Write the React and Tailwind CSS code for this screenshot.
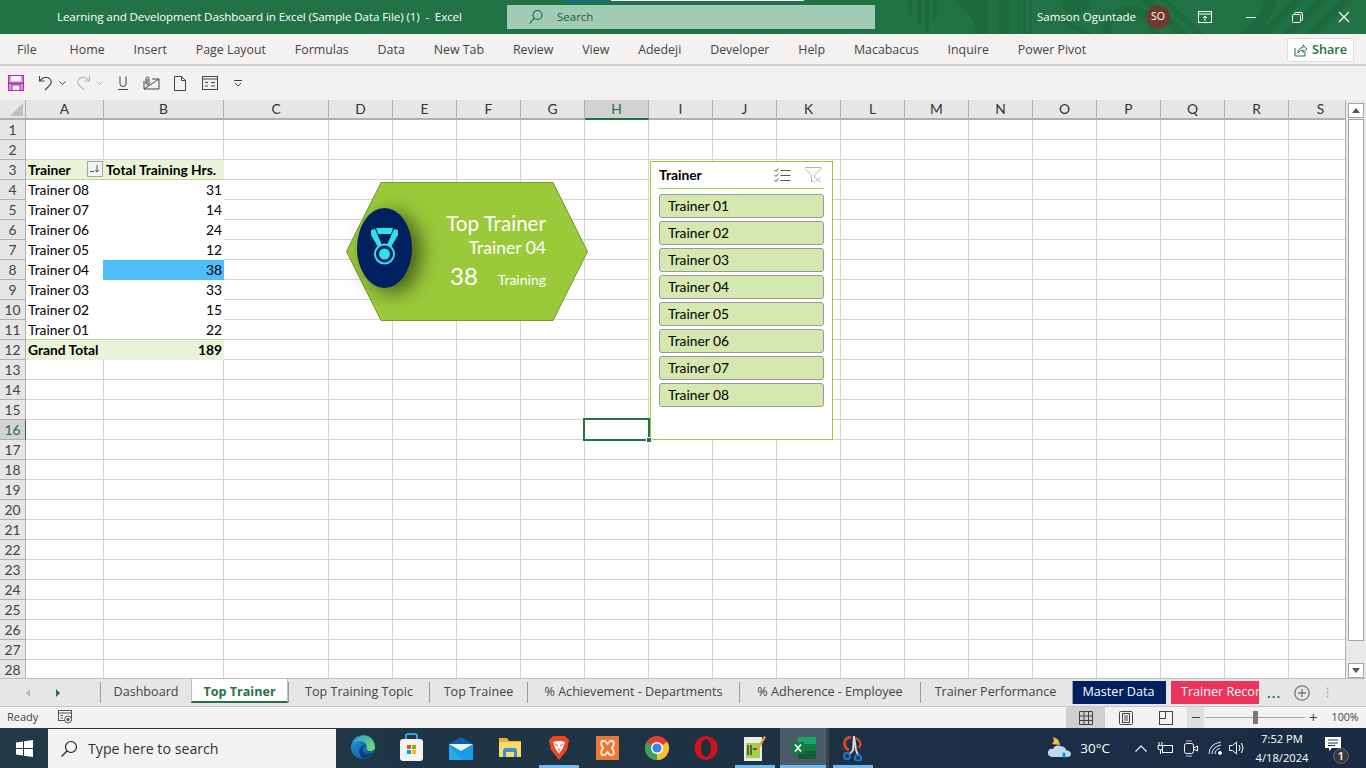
import React from "react";

const COLS = ["A","B","C","D","E","F","G","H","I","J","K","L","M","N","O","P","Q","R","S"];
const GRID = "grid grid-rows-[20px] grid-cols-[26px_78px_120px_105px_repeat(16,64px)]";
const RIBBON = ["Home","Insert","Page Layout","Formulas","Data","New Tab","Review","View","Adedeji","Developer","Help","Macabacus","Inquire","Power Pivot"];
const SHEETS = [
  { name: "Dashboard", w: "w-[91px]" },
  { name: "Top Trainer", w: "w-[97px]", active: true },
  { name: "Top Training Topic", w: "w-[141px]" },
  { name: "Top Trainee", w: "w-[98px]" },
  { name: "% Achievement - Departments", w: "w-[212px]" },
  { name: "% Adherence - Employee", w: "w-[181px]" },
  { name: "Trainer Performance", w: "w-[150px]" },
];
const PIVOT = {
  3: ["Trainer", "Total Training Hrs."],
  4: ["Trainer 08", 31], 5: ["Trainer 07", 14], 6: ["Trainer 06", 24], 7: ["Trainer 05", 12],
  8: ["Trainer 04", 38], 9: ["Trainer 03", 33], 10: ["Trainer 02", 15], 11: ["Trainer 01", 22],
  12: ["Grand Total", 189],
};
const SLICER = ["Trainer 01","Trainer 02","Trainer 03","Trainer 04","Trainer 05","Trainer 06","Trainer 07","Trainer 08"];
const cellFont = "font-['Lato','Liberation_Sans',sans-serif] text-[13.8px]";

function TitleArt() {
  return (
    <svg className="absolute left-[880px] top-0" width="486" height="34" viewBox="0 0 486 34" fill="#1e6a3f">
      <rect x="28" y="0" width="4" height="15" /><rect x="37" y="0" width="4" height="24" /><rect x="45" y="0" width="4" height="31" /><rect x="53" y="0" width="4" height="20" />
      <polygon points="75,0 95,0 95,22" />
      <rect x="94" y="0" width="14" height="34" /><rect x="118" y="0" width="12" height="34" />
      <rect x="137" y="0" width="3" height="34" /><rect x="143" y="0" width="3" height="34" /><rect x="149" y="0" width="3" height="34" />
      <circle cx="196" cy="0" r="14" />
      <circle cx="250" cy="34" r="24" fill="none" stroke="#1e6a3f" strokeWidth="8" />
      <polygon points="176,20 186,20 214,34 204,34" />
      <path d="M260 0 L296 34 L308 34 L272 0 Z" />
      <path d="M280 0 L316 34 L324 34 L288 0 Z" />
      <path d="M360 34 A62 62 0 0 0 384 0 L398 0 A76 76 0 0 1 376 34 Z" />
      <path d="M412 0 L378 34 L390 34 L424 0 Z" /><path d="M436 0 L402 34 L414 34 L448 0 Z" /><path d="M460 0 L426 34 L438 34 L472 0 Z" />
    </svg>
  );
}

function TitleBar() {
  return (
    <div className="relative flex h-[34px] items-center bg-[#217346] text-white font-['Open_Sans',sans-serif]">
      <TitleArt />
      <div className="absolute left-[564px] top-0 h-[1px] w-[47px] bg-[#0f6cbd]" />
      <div className="absolute left-[611px] top-0 h-[1px] w-[193px] bg-white" />
      <span className="relative ml-[57px] w-[450px] whitespace-pre pb-[1px] text-[11.6px] tracking-[-0.1px]">Learning and Development Dashboard in Excel (Sample Data File) (1)  -  Excel</span>
      <div className="relative flex h-[24px] w-[368px] items-center bg-[#a0ccb5] text-[#1e5c3a]">
        <svg className="ml-[21px]" width="16" height="16" viewBox="0 0 16 16" fill="none" stroke="#1e5c3a" strokeWidth="1.1"><circle cx="9.5" cy="6" r="4.5" /><path d="M6.2 9.3 L1.5 14.5" /></svg>
        <span className="ml-[13px] text-[11.5px]">Search</span>
      </div>
      <span className="relative ml-[162px] text-[11.5px]">Samson Oguntade</span>
      <div className="relative ml-[10px] flex h-[24px] w-[24px] items-center justify-center rounded-full bg-[#6b3a2e] text-[10.5px]">SO</div>
      <svg className="relative ml-[28px]" width="14" height="13" viewBox="0 0 14 13" fill="none" stroke="white"><rect x="0.5" y="0.5" width="13" height="11" /><path d="M0.5 3 H13.5 M7 10 V5 M5 7 L7 5 L9 7" /></svg>
      <div className="relative ml-[34px] h-[1px] w-[10px] bg-white" />
      <svg className="relative ml-[36px]" width="11" height="11" viewBox="0 0 11 11" fill="none" stroke="white"><rect x="0.5" y="2.5" width="8" height="8" rx="1" /><path d="M2.5 2.5 V1.5 Q2.5 0.5 3.5 0.5 H9 Q10.5 0.5 10.5 2 V7.5 Q10.5 8.5 9 8.5" /></svg>
      <svg className="relative ml-[35px]" width="12" height="12" viewBox="0 0 12 12" stroke="white" strokeWidth="1.1"><path d="M1 1 L11 11 M11 1 L1 11" /></svg>
    </div>
  );
}

function RibbonTabs() {
  return (
    <div className="flex h-[32px] items-center border-b-2 border-[#d2d0ce] bg-[#f3f2f1] pt-[2px] text-[12.4px] text-[#444] font-['Open_Sans',sans-serif]">
      <span className="ml-[17px] mr-[33px]">File</span>
      <div className="flex gap-[28.85px]">
        {RIBBON.map((t) => <span key={t}>{t}</span>)}
      </div>
      <div className="ml-auto mr-[12px] flex h-[24px] w-[67px] items-center justify-center gap-[4px] rounded-[2px] border border-[#e1dfdd] bg-white text-[12.6px] font-semibold text-[#217346]">
        <svg width="14" height="14" viewBox="0 0 14 14" fill="none" stroke="#217346"><path d="M1 5 V13 H11 V9" /><path d="M4 10 Q4 5 9 4.5 V2 L13 6 L9 9.5 V7 Q6 7 4 10 Z" /></svg>
        Share
      </div>
    </div>
  );
}

function QuickAccess() {
  return (
    <div className="relative flex h-[34px] items-center bg-[#f3f2f1] shadow-[0_1px_2px_rgba(0,0,0,0.12)]">
      <svg className="ml-[8px]" width="16" height="16" viewBox="0 0 16 16"><rect x="0.5" y="0.5" width="15" height="15" fill="#dd8fdd" stroke="#a835a8" /><rect x="3" y="1" width="10" height="5.5" fill="#f3f2f1" /><rect x="4" y="10" width="8" height="5.5" fill="#f3f2f1" stroke="#a835a8" /><rect x="1" y="7.5" width="14" height="1.6" fill="#a835a8" /></svg>
      <svg className="ml-[14px]" width="16" height="16" viewBox="0 0 16 16" fill="none" stroke="#444" strokeWidth="1.1"><path d="M1.5 1 V6 H6.5" /><path d="M1.5 6 L5 3 Q9 1 12 4 Q15 8 11 11 L7 15" /></svg>
      <svg className="ml-[5px]" width="7" height="5" viewBox="0 0 7 5" fill="none" stroke="#444"><path d="M0.5 0.5 L3.5 3.5 L6.5 0.5" /></svg>
      <svg className="ml-[9px]" width="16" height="16" viewBox="0 0 16 16" fill="none" stroke="#b5b5b5" strokeWidth="1.1"><path d="M14.5 1 V6 H9.5" /><path d="M14.5 6 L11 3 Q7 1 4 4 Q1 8 5 11 L9 15" /></svg>
      <svg className="ml-[5px]" width="7" height="5" viewBox="0 0 7 5" fill="none" stroke="#b5b5b5"><path d="M0.5 0.5 L3.5 3.5 L6.5 0.5" /></svg>
      <svg className="ml-[15px]" width="10" height="14" viewBox="0 0 10 14" fill="none" stroke="#444"><path d="M2 0.5 V8 Q2 10.5 5 10.5 Q8 10.5 8 8 V0.5" /><path d="M0 13.5 H10" /></svg>
      <svg className="ml-[15px]" width="17" height="14" viewBox="0 0 17 14" fill="none" stroke="#444"><path d="M1 5 V13 H16 V3 H9" /><path d="M1 13 L16 3" /><path d="M3 8 V2.5 Q3 1 4.5 1 Q6 1 6 2.5 V8 Q6 9 5 9 Q4 9 4 8 V3" /></svg>
      <svg className="ml-[14px]" width="12" height="15" viewBox="0 0 12 15" fill="none" stroke="#444"><path d="M0.5 0.5 H7.5 L11.5 4.5 V14.5 H0.5 Z M7.5 0.5 V4.5 H11.5" /></svg>
      <svg className="ml-[16px]" width="16" height="14" viewBox="0 0 16 14" fill="none" stroke="#444"><rect x="0.5" y="0.5" width="15" height="13" /><path d="M0.5 3 H15.5 M3 6.5 H6 M3 10 H6 M9 6.5 H13 M9 10 H13" /></svg>
      <svg className="ml-[16px]" width="8" height="7" viewBox="0 0 8 7" fill="none" stroke="#444"><path d="M0 0.5 H8 M1 3 L4 6 L7 3" /></svg>
    </div>
  );
}

function PivotCell({ row, col }) {
  const data = PIVOT[row];
  const bold = row === 3 || row === 12;
  const value = data[col];
  const tone = bold ? "bg-[#e9f3d9] font-bold" : "bg-white";
  const edge = row === 3 || row === 11 ? "border-b border-[#c2d99a]" : "border-b border-transparent";
  if (col === 0) {
    return (
      <div className={`relative flex items-center pl-[2px] pt-[1px] ${tone} ${edge} ${cellFont} text-black`}>
        <span className="whitespace-nowrap">{value}</span>
        {row === 3 && (
          <span className="absolute right-[1px] top-[1px] flex h-[16px] w-[16px] items-center justify-center border border-[#a6a6a6] bg-[#f4f4f4]">
            <svg width="12" height="10" viewBox="0 0 12 10" fill="none" stroke="#555"><path d="M1 7.5 H5 M8 1 V8 M6 6 L8 8 L10 6" /></svg>
          </span>
        )}
      </div>
    );
  }
  const highlight = row === 8 ? "bg-[#4fbdf8]" : tone;
  return (
    <div className={`relative -ml-[1px] flex items-center pr-[2px] pt-[1px] ${row === 3 ? "justify-start pl-[3px]" : "justify-end"} ${highlight} ${edge} ${cellFont} text-black whitespace-nowrap`}>
      {value}
    </div>
  );
}

function SheetRow({ row }) {
  const selected = row === 16;
  return (
    <div className={`${GRID} h-[20px]`}>
      <div className={`flex items-center justify-center border-b border-r pt-[1px] text-[#444] ${cellFont} ${selected ? "border-b-[#b0b0b0] border-r-[#217346] bg-[#d2d2d2] text-[#217346]" : "border-[#b0b0b0] bg-[#e6e6e6]"}`}>{row}</div>
      {COLS.map((c, i) =>
        PIVOT[row] && i < 2 ? (
          <PivotCell key={c} row={row} col={i} />
        ) : (
          <div key={c} className="border-b border-r border-[#d4d4d4] bg-white" />
        )
      )}
    </div>
  );
}

function TopTrainerCard() {
  return (
    <div className="absolute left-[346px] top-[82px] h-[139px] w-[242px] text-white font-['Lato',sans-serif]">
      <svg className="absolute inset-0" width="242" height="139" viewBox="0 0 242 139">
        <defs><filter id="blur" x="-60%" y="-60%" width="220%" height="220%"><feGaussianBlur stdDeviation="10" /></filter></defs>
        <polygon points="0.5,69.5 35,0.5 207,0.5 241.5,69.5 207,138.5 35,138.5" fill="#9aca3a" stroke="#71982a" />
        <ellipse cx="47" cy="71" rx="28" ry="40" fill="#000" opacity="0.55" filter="url(#blur)" />
        <ellipse cx="38.5" cy="66" rx="27.5" ry="40" fill="#002060" />
        <polygon points="30,46 47,46 45,52 32,52" fill="#2ee3e6" />
        <polygon points="25,48 29,47 36,63 32,65 25,53" fill="#2ee3e6" />
        <polygon points="52,48 48,47 41,63 45,65 52,53" fill="#2ee3e6" />
        <circle cx="38.5" cy="72" r="9.5" fill="none" stroke="#2ee3e6" strokeWidth="2" />
        <circle cx="38.5" cy="72" r="5.5" fill="#2ee3e6" />
      </svg>
      <div className="absolute right-[42px] top-[28px] flex flex-col items-end">
        <span className="text-[20.6px] leading-[26px]">Top Trainer</span>
        <span className="text-[17.5px] leading-[23px]">Trainer 04</span>
        <div className="mt-[1px] flex w-[96px] items-baseline justify-between">
          <span className="text-[24px] leading-[32px]">38</span>
          <span className="text-[14px]">Training</span>
        </div>
      </div>
    </div>
  );
}

function Slicer() {
  return (
    <div className="absolute left-[650px] top-[61px] flex h-[279px] w-[183px] flex-col border border-[#9aca3a] bg-white px-[8px] text-black font-['Lato',sans-serif]">
      <div className="flex h-[27px] items-center justify-between border-b border-[#9aca3a]">
        <span className="text-[13.8px] font-bold">Trainer</span>
        <div className="flex items-center gap-[13px] pr-[2px]">
          <svg width="18" height="16" viewBox="0 0 17 16" fill="none" stroke="#555"><path d="M1 3 L2.5 4.5 L5 1.5 M1 8 L2.5 9.5 L5 6.5 M1 13 L2.5 14.5 L5 11.5 M7 3.5 H17 M7 8.5 H17 M7 13.5 H17" /></svg>
          <svg width="18" height="16" viewBox="0 0 17 16" fill="none" stroke="#b5b5b5"><path d="M0.5 0.5 H16.5 V2 L10 8 V11 M0.5 2 L7 8 V15 L9 13.5" /><path d="M10 10 L16 15.5 M16 10 L10 15.5" /></svg>
        </div>
      </div>
      <div className="mt-[5px] flex flex-col gap-[3px]">
        {SLICER.map((t) => (
          <div key={t} className="flex h-[24px] items-center rounded-[3px] border border-[#9a9a9a] bg-[#d5e8af] pl-[8px] text-[13.8px]">{t}</div>
        ))}
      </div>
    </div>
  );
}

function Sheet() {
  const rows = Array.from({ length: 28 }, (_, i) => i + 1);
  return (
    <div className="relative flex h-[578px] overflow-hidden bg-[#e6e6e6]">
      <div className="w-[1346px] overflow-hidden border-r border-[#b0b0b0]">
        <div className={`${GRID} h-[20px] ${cellFont} text-[#333]`}>
          <div className="relative border-b-2 border-r border-[#b0b0b0] bg-[#e6e6e6]">
            <div className="absolute bottom-[2px] right-[2px] h-0 w-0 border-b-[13px] border-l-[13px] border-b-[#c0c0c0] border-l-transparent" />
          </div>
          {COLS.map((c) => (
            <div key={c} className={`flex items-center justify-center border-b-2 border-r ${c === "H" ? "border-b-[#217346] border-r-[#b0b0b0] bg-[#d2d2d2] text-[#217346]" : "border-[#b0b0b0] bg-[#e6e6e6]"}`}>{c}</div>
          ))}
        </div>
        {rows.map((r) => <SheetRow key={r} row={r} />)}
      </div>
      <div className="flex w-[20px] flex-col items-center bg-[#e9e9e9] pt-[3px]">
        <div className="flex h-[15px] w-[16px] items-center justify-center border border-[#a6a6a6] bg-white">
          <div className="h-0 w-0 border-x-[4px] border-b-[5px] border-x-transparent border-b-[#555]" />
        </div>
        <div className="mt-[1px] h-[522px] w-[16px] border border-[#a6a6a6] bg-white" />
        <div className="mt-[22px] flex h-[15px] w-[16px] items-center justify-center border border-[#a6a6a6] bg-white">
          <div className="h-0 w-0 border-x-[4px] border-t-[5px] border-x-transparent border-t-[#555]" />
        </div>
      </div>
      <TopTrainerCard />
      <Slicer />
      <div className="absolute left-[583px] top-[318px] h-[23px] w-[67px] border-2 border-[#217346]" />
      <div className="absolute left-[646px] top-[337px] h-[6px] w-[6px] border border-white bg-[#217346]" />
    </div>
  );
}

function SheetTabs() {
  return (
    <div className="flex h-[29px] items-stretch border-t border-[#bdbdbd] border-b border-b-[#c8c8c8] bg-[#e6e6e6] text-[12.6px] text-[#444] font-['Open_Sans',sans-serif]">
      <div className="flex w-[100px] items-center pl-[26px]">
        <div className="h-0 w-0 border-y-[4px] border-r-[4px] border-y-transparent border-r-[#b8b8b8]" />
        <div className="ml-[26px] h-0 w-0 border-y-[4px] border-l-[4px] border-y-transparent border-l-[#217346]" />
      </div>
      {SHEETS.map((s) => s.active ? (
        <div key={s.name} className={`${s.w} -mt-[1px] mb-[3px] flex items-center justify-center border-x border-t border-[#bdbdbd] border-b-2 border-b-[#217346] bg-white pt-[4px] font-bold text-[#217346]`}>{s.name}</div>
      ) : (
        <div key={s.name} className={`${s.w} my-[3px] flex items-center justify-center border-l border-[#9a9a9a] whitespace-nowrap`}>{s.name}</div>
      ))}
      <div className="my-[2px] ml-[2px] flex w-[94px] items-center justify-center border-l border-[#9a9a9a] bg-[#002060] pr-[2px] text-white">Master Data</div>
      <div className="my-[2px] ml-[5px] flex w-[88px] items-center whitespace-nowrap bg-[#eb345c] pl-[10px] text-white">Trainer Recor</div>
      <span className="ml-[8px] self-center pt-[2px] text-[13px] font-bold tracking-[1px] text-[#217346]">...</span>
      <svg className="ml-[13px] self-center" width="16" height="16" viewBox="0 0 16 16" fill="none" stroke="#777" strokeWidth="1.3"><circle cx="8" cy="8" r="7.2" /><path d="M8 4 V12 M4 8 H12" /></svg>
      <svg className="ml-[16px] self-center" width="3" height="11" viewBox="0 0 3 11" fill="#aaa"><circle cx="1.5" cy="1.5" r="1" /><circle cx="1.5" cy="5.5" r="1" /><circle cx="1.5" cy="9.5" r="1" /></svg>
    </div>
  );
}

function StatusBar() {
  return (
    <div className="flex h-[21px] items-center bg-[#f3f2f1] text-[11px] text-[#444] font-['Open_Sans',sans-serif]">
      <span className="ml-[7px] w-[51px]">Ready</span>
      <svg width="15" height="15" viewBox="0 0 15 15" fill="none" stroke="#555"><rect x="0.5" y="0.5" width="13" height="10" /><path d="M0.5 3 H13.5 M2.5 5.5 H5 M2.5 8 H5" /><circle cx="10" cy="9.5" r="3.5" fill="#f3f2f1" /><circle cx="10" cy="9.5" r="1.2" fill="#555" /></svg>
      <div className="ml-[993px] flex h-full w-[39px] items-center justify-center bg-[#d2d0ce]">
        <svg width="14" height="14" viewBox="0 0 14 14" fill="none" stroke="#444"><path d="M0.5 0.5 H13.5 V13.5 H0.5 Z M0.5 5 H13.5 M0.5 9.5 H13.5 M5 0.5 V13.5 M9.5 0.5 V13.5" /></svg>
      </div>
      <svg className="ml-[14px]" width="14" height="14" viewBox="0 0 14 14" fill="none" stroke="#444"><rect x="0.5" y="0.5" width="13" height="13" rx="1" /><rect x="3.5" y="2.5" width="7" height="9" /><path d="M5 5 H9 M5 7 H9 M5 9 H9" /></svg>
      <svg className="ml-[26px]" width="14" height="14" viewBox="0 0 14 14" fill="none" stroke="#444"><rect x="0.5" y="0.5" width="13" height="13" /><path d="M6.5 0.5 V7.5 H0.5" /></svg>
      <div className="ml-[14px] flex h-full w-[17px] items-center justify-center bg-[#e1dfdd]"><div className="h-[1px] w-[8px] bg-[#444]" /></div>
      <div className="relative ml-[1px] h-[1px] w-[100px] bg-[#a6a6a6]">
        <div className="absolute left-[48px] top-[-6px] h-[13px] w-[5px] bg-[#777]" />
      </div>
      <span className="ml-[4px] text-[15px] leading-none">+</span>
      <span className="ml-[14px] text-[10.6px]">100%</span>
    </div>
  );
}

function Taskbar() {
  const lit = "absolute bottom-0 left-[-20px] h-[3px] w-[40px] bg-[#76b9ed]";
  return (
    <div className="relative flex h-[40px] bg-gradient-to-r from-[#223a45] to-[#1a2a44] text-white font-['Open_Sans',sans-serif]">
      <div className="flex w-[48px] items-center justify-center">
        <svg width="17" height="17" viewBox="0 0 17 17" fill="white"><path d="M0 2.4 L7 1.4 V8 H0 Z M8 1.2 L17 0 V8 H8 Z M0 9 H7 V15.6 L0 14.6 Z M8 9 H17 V17 L8 15.8 Z" /></svg>
      </div>
      <div className="mt-[1px] flex w-[288px] items-center bg-[#f2f2f2] text-[14.2px] text-[#333]">
        <svg className="ml-[12px]" width="18" height="18" viewBox="0 0 18 18" fill="none" stroke="#222" strokeWidth="1.2"><circle cx="11" cy="7" r="5.5" /><path d="M7 11 L1.5 16.5" /></svg>
        <span className="ml-[10px]">Type here to search</span>
      </div>
      <div className="absolute left-[780px] top-0 h-full w-[46px] bg-[#4b5b68]" />
      <div className="absolute left-[826px] top-0 h-full w-[3px] bg-[#33454f]" />
      <div className="absolute left-[351px] top-[7px]"><Edge /></div>
      <div className="absolute left-[400px] top-[5px]"><Store /></div>
      <div className="absolute left-[449px] top-[9px]"><Mail /></div>
      <div className="absolute left-[499px] top-[10px]"><Folder /></div>
      <div className="absolute left-[549px] top-[8px]"><Brave /></div>
      <div className="absolute left-[596px] top-[8px]"><Xampp /></div>
      <div className="absolute left-[645px] top-[8px]"><Chrome /></div>
      <div className="absolute left-[694px] top-[8px]"><Opera /></div>
      <div className="absolute left-[744px] top-[7px]"><Notepad /></div>
      <div className="absolute left-[792px] top-[9px]"><Excel /></div>
      <div className="absolute left-[842px] top-[8px]"><Snip /></div>
      <div className="absolute left-[559px] top-0 h-full"><div className={lit} /></div>
      <div className="absolute left-[755px] top-0 h-full"><div className={lit} /></div>
      <div className="absolute left-[803px] top-0 h-full"><div className="absolute bottom-0 left-[-23px] h-[3px] w-[46px] bg-[#76b9ed]" /></div>
      <div className="absolute left-[853px] top-0 h-full"><div className={lit} /></div>

      <div className="ml-auto flex items-center">
        <svg width="26" height="26" viewBox="0 0 26 26"><path d="M6 2 Q12 3 13 10 L5 9 Q8 6 6 2 Z" fill="#f5b942" /><path d="M5 22 Q0 21 1 17 Q2 13 6 14 Q8 9 14 11 Q19 12 19 15 Q24 16 24 19 Q24 22 20 22 Z" fill="#bcd9f2" /><path d="M17 24 Q14 20 17 17 Q20 20 17 24 Z" fill="#1e7ad6" /></svg>
        <span className="ml-[7px] text-[13.5px]">30°C</span>
        <svg className="ml-[25px]" width="12" height="7" viewBox="0 0 12 7" fill="none" stroke="white" strokeWidth="1.1"><path d="M0.5 6.5 L6 1 L11.5 6.5" /></svg>
        <svg className="ml-[10px]" width="16" height="13" viewBox="0 0 16 13" fill="none" stroke="white"><rect x="5.5" y="3.5" width="10" height="7" /><path d="M2 0 V3 M5 0 V3 M1 3.5 H5.5 V6.5 Q5.5 8 3.5 8 Q1 8 1 6 Z M3.5 8 V12" /></svg>
        <svg className="ml-[11px]" width="14" height="17" viewBox="0 0 14 17" fill="none" stroke="white"><rect x="0.5" y="3.5" width="9" height="10" rx="2" /><path d="M9.5 8 L13.5 6 V11 L9.5 9" /><path d="M2 1 H8 M2 16 H8" opacity="0.7" /></svg>
        <svg className="ml-[10px]" width="15" height="14" viewBox="0 0 15 14" fill="none" stroke="white" strokeWidth="0.9"><path d="M1 13 Q1 3 13 1 M4 13 Q4 6 13 4 M7 13 Q7 8.5 12 7.5" /><circle cx="12" cy="12" r="1.5" fill="white" /></svg>
        <svg className="ml-[6px]" width="16" height="14" viewBox="0 0 16 14" fill="none" stroke="white"><path d="M0.5 4.5 H3.5 L7.5 1 V13 L3.5 9.5 H0.5 Z" /><path d="M10 4 Q12 7 10 10 M12.5 2 Q15.5 7 12.5 12" /></svg>
        <div className="ml-[2px] flex w-[70px] flex-col items-center text-[11.2px] leading-[19px]">
          <span>7:52 PM</span>
          <span>4/18/2024</span>
        </div>
        <div className="relative ml-[8px] mr-[25px] h-[24px] w-[16px]">
          <svg className="absolute left-0 top-[1px]" width="16" height="15" viewBox="0 0 16 15"><path d="M0 0 H16 V11 H7 L4 14 V11 H0 Z" fill="white" /><path d="M3 3 H13 M3 6 H13 M3 8.5 H10" stroke="#1a2a44" /></svg>
          <div className="absolute left-[8px] top-[12px] flex h-[16px] w-[16px] items-center justify-center rounded-full border border-[#666] bg-[#3a3a3a] text-[11px] font-semibold">1</div>
        </div>
      </div>
    </div>
  );
}

const Edge = () => (
  <svg width="24" height="24" viewBox="0 0 24 24">
    <defs><linearGradient id="edgeA" x1="0" y1="0" x2="1" y2="1"><stop offset="0" stopColor="#1d9ad6" /><stop offset="1" stopColor="#0c4f9e" /></linearGradient><linearGradient id="edgeB" x1="0" y1="0" x2="1" y2="1"><stop offset="0" stopColor="#2a9fd8" /><stop offset="1" stopColor="#7ee05a" /></linearGradient></defs>
    <circle cx="12" cy="12" r="12" fill="url(#edgeA)" />
    <path d="M2 9 Q6 0 14 0.5 Q23 2 24 12 Q24 16 19 16 Q15 16 16 12 Q15 6 9 6 Q4 6 2 9 Z" fill="url(#edgeB)" />
    <path d="M11 23 Q6 17 10 12 Q12 9 15 10 Q11 12 12 16 Q14 20 22 18 Q18 24 11 23 Z" fill="#0b3f80" />
  </svg>
);
const Store = () => (
  <svg width="23" height="28" viewBox="0 0 23 28">
    <path d="M6 7 V3 Q6 1 8 1 H15 Q17 1 17 3 V7" fill="none" stroke="#2aa8e8" strokeWidth="2" />
    <rect x="0" y="6" width="23" height="22" rx="3" fill="#f3f3f3" />
    <rect x="7" y="12" width="4" height="4" fill="#f25022" /><rect x="12" y="12" width="4" height="4" fill="#7fba00" /><rect x="7" y="17" width="4" height="4" fill="#00a4ef" /><rect x="12" y="17" width="4" height="4" fill="#ffb900" />
  </svg>
);
const Mail = () => (
  <svg width="24" height="23" viewBox="0 0 24 23">
    <path d="M0 7 L12 0 L24 7 Z" fill="#0e5fae" /><rect x="0" y="7" width="24" height="16" fill="#1c9be6" /><path d="M0 7 H24 L12 14 Z" fill="#e8f3fb" /><path d="M0 23 L0 8 L13 23 Z" fill="#27a9ef" />
  </svg>
);
const Folder = () => (
  <svg width="22" height="20" viewBox="0 0 22 20">
    <path d="M0 0 H8 L10 3 H22 V18 H0 Z" fill="#e9b22c" /><rect x="0" y="4" width="22" height="15" fill="#fbd96b" /><path d="M4 19 V13 Q4 10 7 10 H15 Q18 10 18 13 V19 H15 V14 H7 V19 Z" fill="#3d8fd1" />
  </svg>
);
const Brave = () => (
  <svg width="20" height="24" viewBox="0 0 20 24">
    <path d="M4 0 H16 L20 4 L18 14 L10 24 L2 14 L0 4 Z" fill="#f0451e" />
    <path d="M4 6 L8 5 H12 L16 6 L14 12 L12 15 L10 18 L8 15 L6 12 Z" fill="white" />
    <path d="M6 8 L9 10 M14 8 L11 10 M10 12 V15" stroke="#f0451e" />
  </svg>
);
const Xampp = () => (
  <svg width="23" height="24" viewBox="0 0 23 24">
    <rect width="23" height="24" rx="1" fill="#e87a35" />
    <path d="M6 5 H9 L11.5 8 L14 5 H17 Q19 8 16 12 Q19 16 17 19 H14 L11.5 16 L9 19 H6 Q4 16 7 12 Q4 8 6 5 Z" fill="none" stroke="#fbe3d0" strokeWidth="2" />
  </svg>
);
const Chrome = () => (
  <svg width="24" height="24" viewBox="0 0 24 24">
    <circle cx="12" cy="12" r="12" fill="#e53e30" />
    <path d="M12 12 L1.6 6 A12 12 0 0 0 12 24 Z" fill="#3aa655" />
    <path d="M12 12 L22.4 6 A12 12 0 0 1 12 24 Z" fill="#fbc02d" />
    <circle cx="12" cy="12" r="6" fill="white" /><circle cx="12" cy="12" r="4.6" fill="#3f83e8" />
  </svg>
);
const Opera = () => (
  <svg width="24" height="24" viewBox="0 0 24 24">
    <ellipse cx="12" cy="12" rx="11.5" ry="12" fill="#d0121f" /><ellipse cx="12" cy="12" rx="5" ry="9" fill="#1f2f3f" />
  </svg>
);
const Notepad = () => (
  <svg width="22" height="26" viewBox="0 0 22 26">
    <rect x="0" y="2" width="18" height="24" fill="#e6efe0" />
    <rect x="2" y="8" width="14" height="15" fill="#a3cf4a" />
    <path d="M4 10 V20 M7 10 V20 M9 14 H13" stroke="#333" strokeWidth="1.3" />
    <path d="M20 1 L22 2 L14 16 L12 17 L12.5 14 Z" fill="#e9a13b" />
  </svg>
);
const Excel = () => (
  <svg width="24" height="22" viewBox="0 0 24 22">
    <rect x="6" y="0" width="18" height="7" fill="#21a366" /><rect x="6" y="7" width="18" height="7" fill="#107c41" /><rect x="6" y="14" width="18" height="8" fill="#185c37" />
    <rect x="0" y="5" width="12" height="12" fill="#107c41" />
    <path d="M3 7.5 L9 14.5 M9 7.5 L3 14.5" stroke="white" strokeWidth="1.7" />
  </svg>
);
const Snip = () => (
  <svg width="22" height="25" viewBox="0 0 22 25" fill="none">
    <path d="M9 1 Q1 2 3 10 Q4 13 7 14" stroke="#d9471e" strokeWidth="3" />
    <path d="M14 2 Q21 6 17 12" stroke="#d9471e" strokeWidth="2.5" />
    <path d="M12 0 L11 14 L7 19 M12 0 L14 14 L16 19" stroke="#d8d8d8" strokeWidth="2" />
    <circle cx="5" cy="20" r="3" stroke="#1e7ad6" strokeWidth="2" /><circle cx="16" cy="22" r="3" stroke="#1e7ad6" strokeWidth="2" />
  </svg>
);

export default function App() {
  return (
    <div className="relative h-[768px] w-[1366px] overflow-hidden bg-white">
      <TitleBar />
      <RibbonTabs />
      <QuickAccess />
      <Sheet />
      <SheetTabs />
      <StatusBar />
      <Taskbar />
    </div>
  );
}
